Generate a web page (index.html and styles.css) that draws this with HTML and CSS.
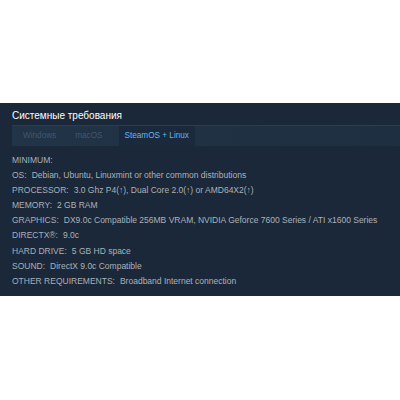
FILE: index.html
```html
<!DOCTYPE html>
<html>
<head>
<meta charset="utf-8">
<link rel="stylesheet" href="styles.css">
</head>
<body>
<div class="panel">
  <div class="title">Системные требования</div>
  <div class="tabs">
    <div class="tab">Windows</div>
    <div class="tab">macOS</div>
    <div class="tab active">SteamOS + Linux</div>
  </div>
  <ul class="reqs">
    <li><span class="lbl">MINIMUM:</span></li>
    <li><span class="lbl">OS:</span><span class="val">Debian, Ubuntu, Linuxmint or other common distributions</span></li>
    <li><span class="lbl">PROCESSOR:</span><span class="val">3.0 Ghz P4(↑), Dual Core 2.0(↑) or AMD64X2(↑)</span></li>
    <li><span class="lbl">MEMORY:</span><span class="val">2 GB RAM</span></li>
    <li><span class="lbl">GRAPHICS:</span><span class="val">DX9.0c Compatible 256MB VRAM, NVIDIA Geforce 7600 Series / ATI x1600 Series</span></li>
    <li><span class="lbl">DIRECTX®:</span><span class="val">9.0c</span></li>
    <li><span class="lbl">HARD DRIVE:</span><span class="val">5 GB HD space</span></li>
    <li><span class="lbl">SOUND:</span><span class="val">DirectX 9.0c Compatible</span></li>
    <li><span class="lbl">OTHER REQUIREMENTS:</span><span class="val">Broadband Internet connection</span></li>
  </ul>
</div>
</body>
</html>
```
FILE: styles.css
```css
html, body {
  margin: 0;
  padding: 0;
  background: #ffffff;
}
body {
  padding-top: 103px;
  font-family: "Liberation Sans", Arial, sans-serif;
}
.panel {
  background: #1b2839;
  height: 193px;
  box-sizing: border-box;
  padding: 6px 0 0 12px;
}
.title {
  color: #ffffff;
  font-size: 10px;
  line-height: 14px;
  height: 16px;
}
.tabs {
  display: flex;
  height: 20px;
  background: linear-gradient(90deg, #223447 0%, #1f3043 60%, #1e2f42 100%);
  border-top: 1px solid #2a3d52;
  padding-left: 5px;
  gap: 7px;
}
.tab {
  font-size: 8.2px;
  line-height: 20px;
  padding: 0 6px;
  color: #3e5873;
}
.tab.active {
  background: #1a2a3c;
  color: #67b3e8;
  margin-left: 3px;
}
.reqs {
  list-style: none;
  margin: 7px 0 0 0;
  padding: 0;
}
.reqs li {
  font-size: 8.5px;
  line-height: 15.1px;
  height: 15.1px;
  white-space: nowrap;
}
.lbl {
  color: #a7b0b9;
  margin-right: 5px;
}
.val {
  color: #acb2b8;
}
```
